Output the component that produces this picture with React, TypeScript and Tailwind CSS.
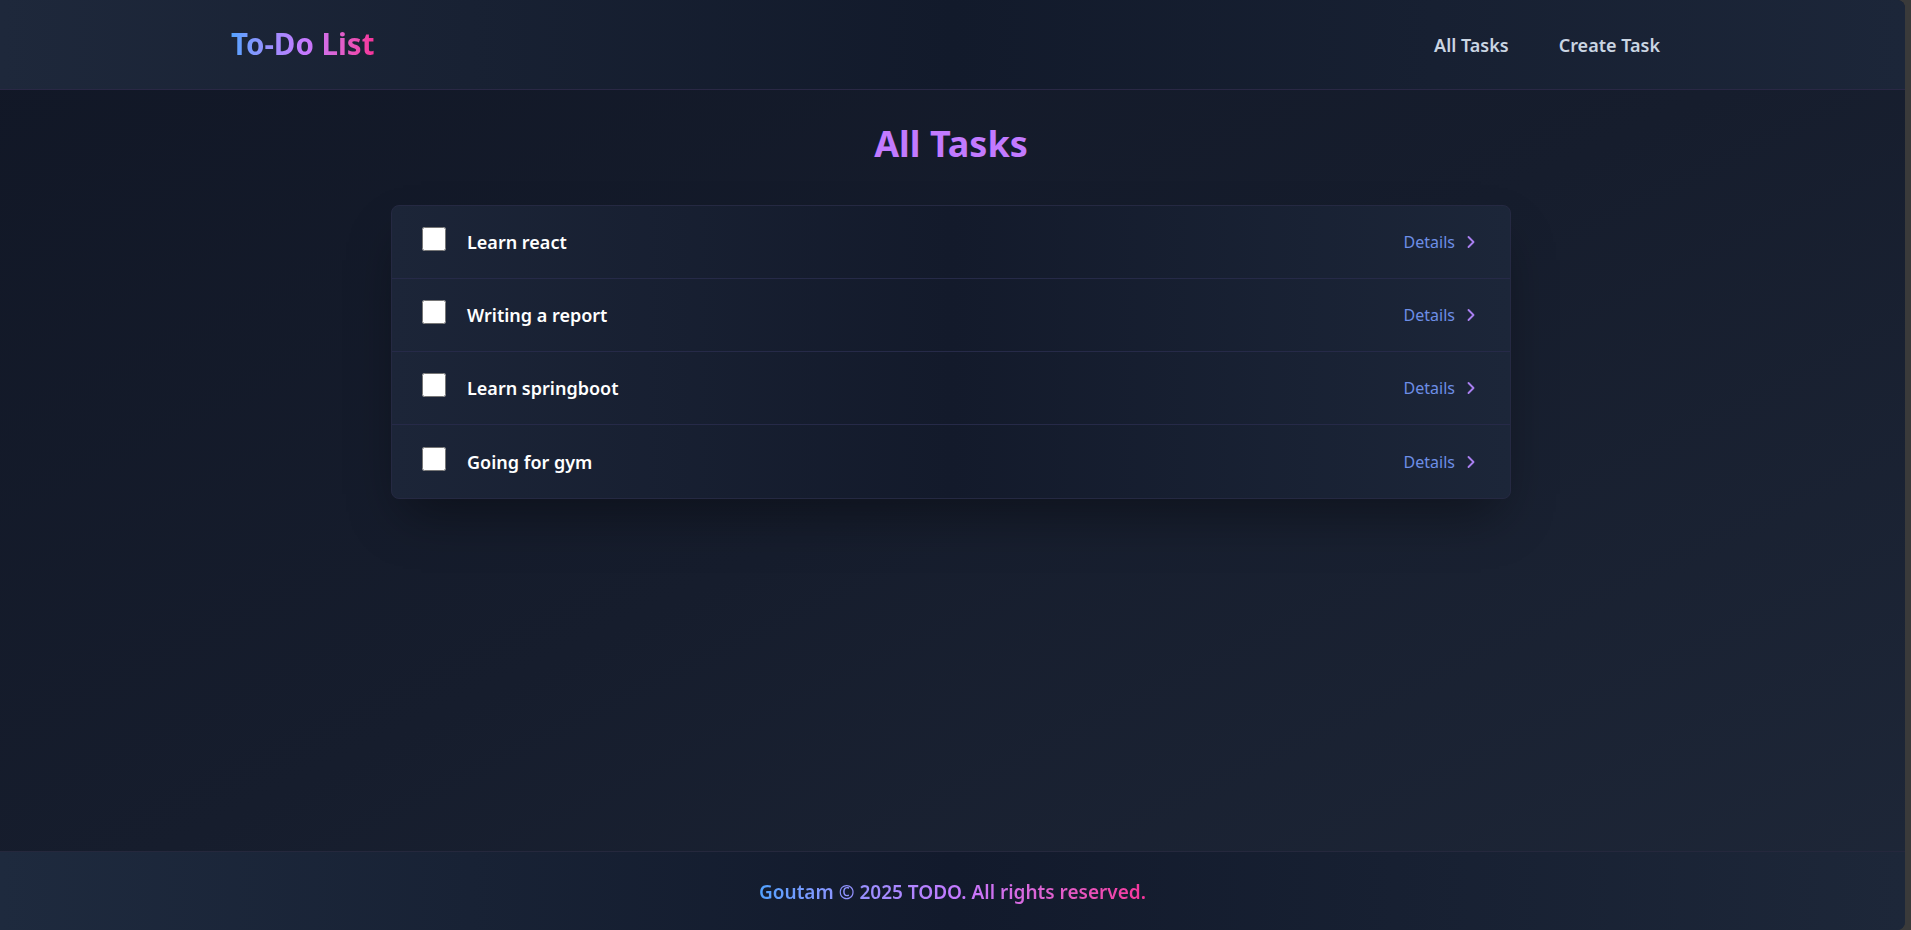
import { ChevronRight } from 'lucide-react';

const tasks = [
  { id: 1, title: 'Learn react' },
  { id: 2, title: 'Writing a report' },
  { id: 3, title: 'Learn springboot' },
  { id: 4, title: 'Going for gym' },
];

function Header() {
  return (
    <header className="h-[90px] shrink-0 border-b border-[#2a2845] bg-gradient-to-r from-[#1e283b] via-[#121a2b] to-[#1c2639]">
      <div className="flex h-full items-center justify-between pl-[231px] pr-[245px]">
        <span className="bg-gradient-to-r from-blue-400 via-purple-400 to-pink-500 bg-clip-text text-[29.5px] font-bold text-transparent">
          To-Do List
        </span>
        <nav className="flex items-center gap-[50px] text-lg font-semibold text-slate-300">
          <a href="#">All Tasks</a>
          <a href="#">Create Task</a>
        </nav>
      </div>
    </header>
  );
}

function TaskRow({ title }: { title: string }) {
  return (
    <li className="flex h-[73px] items-center justify-between pl-[30px] pr-[29px]">
      <div className="flex items-center gap-[21px]">
        <input type="checkbox" className="mb-1.5 h-6 w-6" />
        <span className="text-lg font-semibold text-white">{title}</span>
      </div>
      <a href="#" className="flex items-center gap-1.5 text-[#6d8ee6]">
        Details
        <ChevronRight className="h-5 w-5 text-[#a97ff0]" strokeWidth={2.25} />
      </a>
    </li>
  );
}

function Footer() {
  return (
    <footer className="h-[79px] shrink-0 border-t border-[#25283d] bg-gradient-to-r from-[#1e2a3e] via-[#121a2c] to-[#1d2739]">
      <div className="flex h-full items-center justify-center pt-[3px]">
        <p className="bg-gradient-to-r from-blue-400 via-purple-400 to-pink-500 bg-clip-text text-[19px] font-semibold text-transparent">
          Goutam © 2025 TODO. All rights reserved.
        </p>
      </div>
    </footer>
  );
}

export default function App() {
  return (
    <div className="flex h-[930px] bg-[#3a3a3a]" style={{ fontFamily: '"Noto Sans", "Open Sans", sans-serif' }}>
      <div className="flex flex-1 flex-col overflow-hidden rounded-r-lg bg-gradient-to-br from-[#111726] via-[#161d2d] to-[#1e2738]">
        <Header />
        <main className="flex-1 pr-[3px] pt-[34px]">
          <h1 className="text-center text-4xl font-bold text-purple-400">All Tasks</h1>
          <ul className="mx-auto mt-[41px] w-[1120px] divide-y divide-[#262a48] overflow-hidden rounded-lg border border-[#252942] bg-gradient-to-r from-[#1c2538] via-[#131a2b] to-[#1c2639] shadow-2xl shadow-black/40">
            {tasks.map(t => (
              <TaskRow key={t.id} title={t.title} />
            ))}
          </ul>
        </main>
        <Footer />
      </div>
      <div className="w-[6px]" />
    </div>
  );
}
